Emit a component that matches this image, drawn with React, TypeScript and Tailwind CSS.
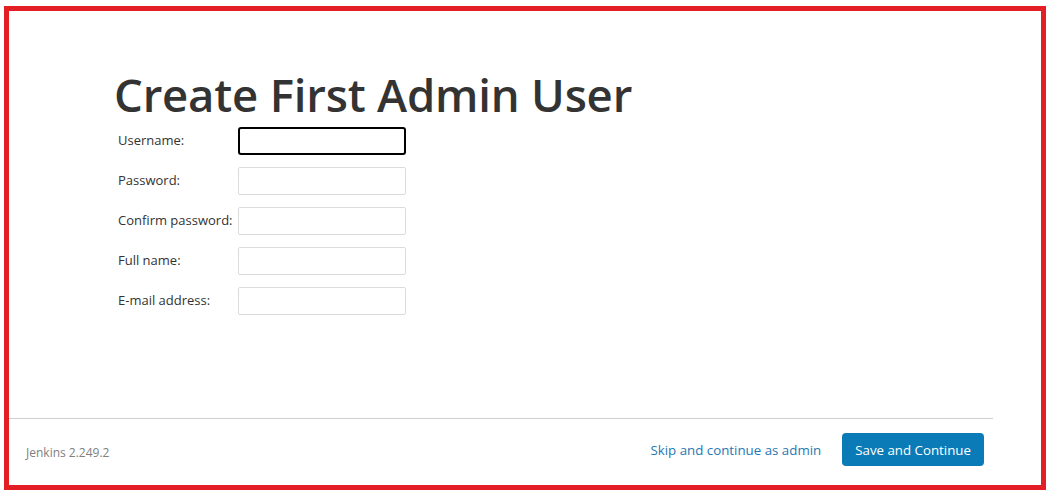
const fields = [
  { label: "Username:", type: "text", focus: true },
  { label: "Password:", type: "password" },
  { label: "Confirm password:", type: "password" },
  { label: "Full name:", type: "text" },
  { label: "E-mail address:", type: "email" },
];

export default function App() {
  return (
    <div className="h-[495px] w-[1050px] bg-white pl-[4px] pr-[4px] pt-[6px] pb-[5px] font-['Open_Sans',sans-serif]">
      <div className="flex h-full flex-col border-[5px] border-[#e31e24] bg-white">
        <div className="flex-1 pl-[105px] pt-[55px]">
          <h1 className="text-[45.5px] font-semibold leading-[56px] tracking-[-0.2px] text-[#333]">
            Create First Admin User
          </h1>
          <div className="mt-[5px] flex flex-col gap-[12px]">
            {fields.map((f) => (
              <div key={f.label} className="flex items-center">
                <label className="w-[124px] pl-[4px] text-[13px] text-[#333]">{f.label}</label>
                <input
                  type={f.type}
                  className={
                    f.focus
                      ? "h-[28px] w-[168px] rounded-[3px] border-2 border-black outline-none"
                      : "h-[28px] w-[168px] rounded-[2px] border border-[#dcdcdc] outline-none"
                  }
                />
              </div>
            ))}
          </div>
        </div>
        <div className="mr-[48px] border-t border-[#cfcfcf]" />
        <div className="flex h-[66px] items-start justify-between pl-[17px] pr-[57px] pt-[14px]">
          <span className="mt-[11px] text-[12px] text-[#808080]">Jenkins 2.249.2</span>
          <div className="flex items-center gap-[21px]">
            <a className="pt-[2px] text-[13.3px] text-[#1f78b4]">Skip and continue as admin</a>
            <button className="h-[33px] rounded-[4px] bg-[#0b7bb8] px-[13px] pt-[2px] text-[13.3px] text-white">
              Save and Continue
            </button>
          </div>
        </div>
      </div>
    </div>
  );
}
